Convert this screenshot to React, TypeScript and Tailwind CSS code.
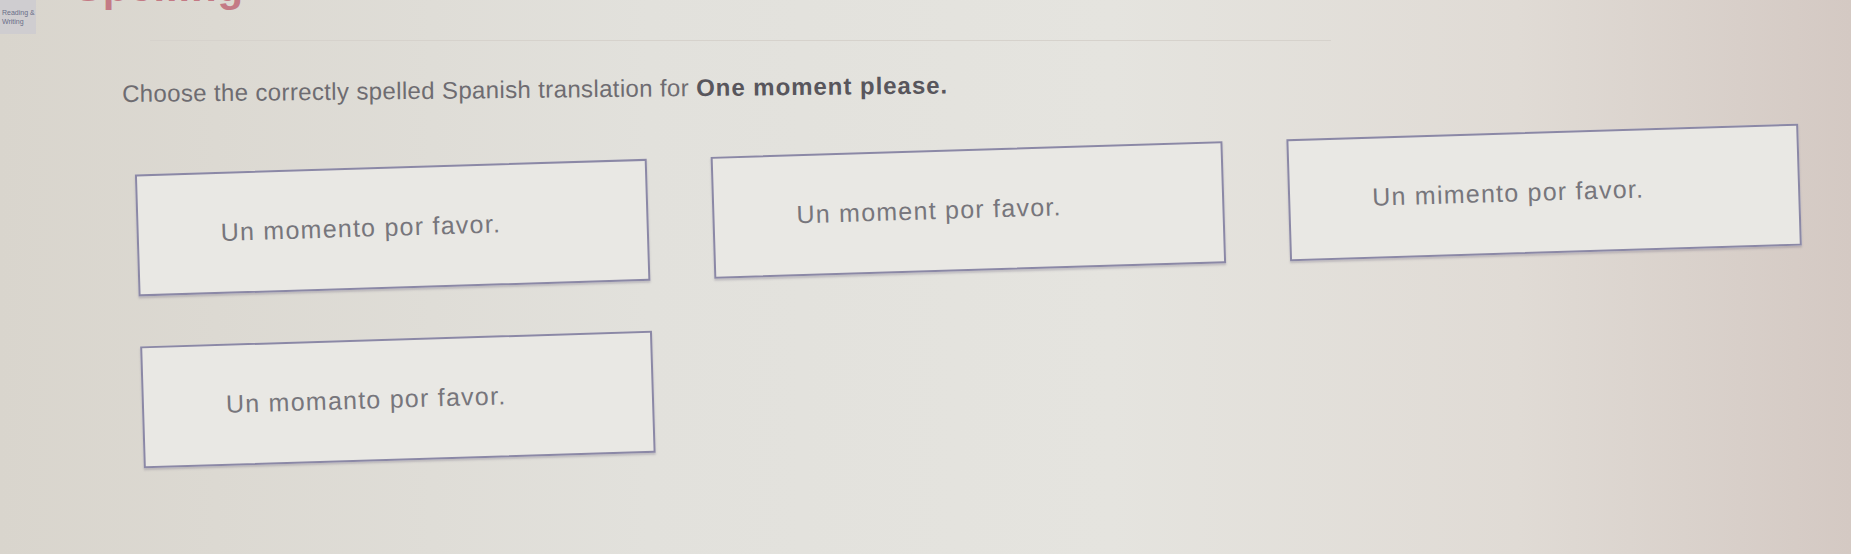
import React from 'react';

const options = [
  'Un momento por favor.',
  'Un moment por favor.',
  'Un mimento por favor.',
  'Un momanto por favor.',
];

const OptionCard: React.FC<{ label: string }> = ({ label }) => (
  <button
    type="button"
    className="flex h-[122px] items-center border-[2.5px] border-[#8b88a6] bg-[#e9e8e4] pl-[82px] text-left text-[25px] tracking-[0.05em] text-[#77767c] shadow-[0_2px_2px_rgba(90,85,110,0.25)]"
  >
    {label}
  </button>
);

export default function App() {
  return (
    <div className="relative h-[554px] w-full overflow-hidden bg-[linear-gradient(90deg,#d9d5cd_0%,#e2e1dc_35%,#e5e4df_60%,#e0dbd5_82%,#d4c9c3_100%)] font-['Liberation_Sans',Arial,sans-serif]">
      {/* top bar, mostly scrolled out of view */}
      <div className="flex h-[40px] items-start">
        <div className="flex h-[34px] w-[36px] flex-col justify-center bg-[#cfcdd0] pl-[2px] text-[7px] leading-[9px] text-[#6a6e88]">
          <span>Reading &amp;</span>
          <span>Writing</span>
        </div>
        <span className="-mt-[34px] ml-[38px] text-[42px] font-bold leading-none tracking-[0.02em] text-[#c47a85]">Spelling</span>
      </div>
      <div className="ml-[150px] mr-[520px] h-px bg-[#d6d2cc]" />

      <p className="ml-[122px] mt-[30px] -rotate-[0.6deg] text-[24px] leading-[28px] tracking-[0.015em] text-[#6e6c71]">
        Choose the correctly spelled Spanish translation for{' '}
        <span className="font-bold tracking-[0.04em] text-[#58565c]">One moment please.</span>
      </p>

      <div className="ml-[139px] mt-[50px] grid w-[1664px] -rotate-[1.75deg] grid-cols-[repeat(3,512px)] gap-x-[64px] gap-y-[50px]">
        {options.map((o) => (
          <OptionCard key={o} label={o} />
        ))}
      </div>
    </div>
  );
}
